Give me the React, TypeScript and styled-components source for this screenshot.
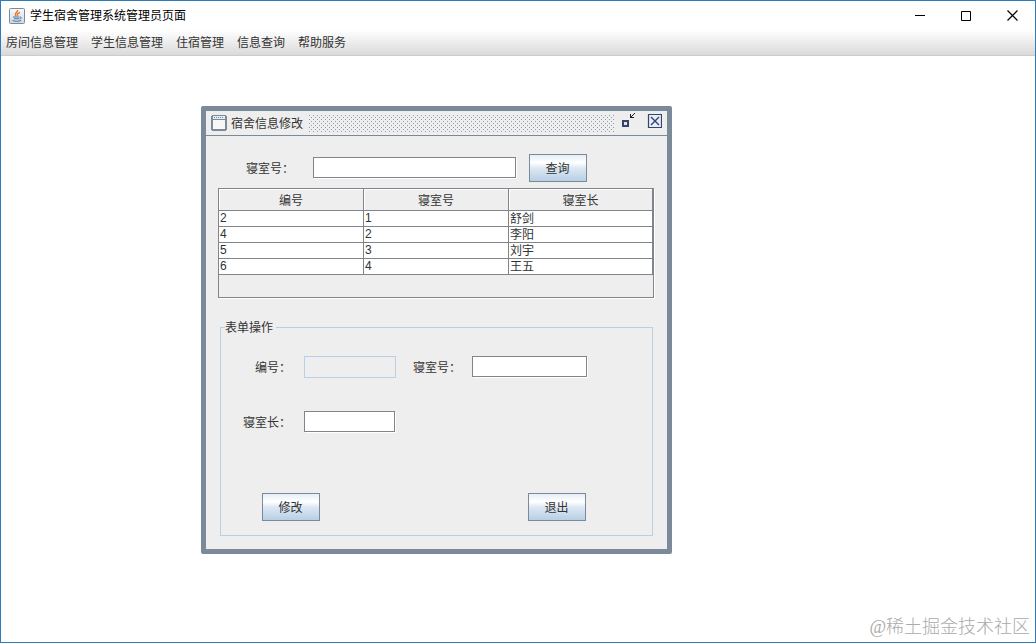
import React from "react";
import styled, { createGlobalStyle } from "styled-components";

const Global = createGlobalStyle`
  * { box-sizing: border-box; }
  body { margin: 0; background: #fff; }
  body, button, input, table {
    font: 12px/16px "Liberation Sans", "Noto Sans CJK SC", sans-serif;
    color: #333;
  }
`;

const AppWindow = styled.div`
  position: relative;
  display: flex;
  flex-direction: column;
  min-height: 100vh;
  border: 1px solid #2f7cba;
  background: #fff;
`;

const WindowBar = styled.header`
  display: flex;
  align-items: center;
  height: 29px;
  padding-left: 8px;
`;

const WindowTitle = styled.h1`
  flex: 1;
  margin: 0 0 0 5px;
  font-size: 12px;
  line-height: 16px;
  font-weight: 400;
  color: #000;
`;

const WindowButton = styled.button`
  display: grid;
  place-items: center;
  width: 46px;
  height: 28px;
  padding: 0;
  border: 0;
  background: none;
`;

const MenuBar = styled.nav`
  display: flex;
  align-items: center;
  gap: 13px;
  height: 26px;
  padding: 0 5px;
  border-bottom: 1px solid #ccc;
  background: linear-gradient(#fff, #dadada);
`;

const MenuItem = styled.button`
  padding: 0;
  border: 0;
  background: none;
`;

const Desktop = styled.main`
  position: relative;
  flex: 1;
`;

const Frame = styled.section`
  position: absolute;
  left: 200px;
  top: 50px;
  width: 471px;
  border: 5px solid #7a8a99;
  border-radius: 2px;
  background: #eee;
`;

const FrameBar = styled.header`
  display: flex;
  align-items: center;
  height: 25px;
  padding: 0 5px;
  border-bottom: 1px solid #7a8a99;
`;

const FrameTitle = styled.h2`
  margin: 0 6px 0 4px;
  padding-top: 2px;
  font-size: 12px;
  line-height: 16px;
  font-weight: 400;
`;

const Grip = styled.div`
  flex: 1;
  height: 17px;
  margin-right: 6px;
  background-image: conic-gradient(at 1px 1px, transparent 75%, #8f9ba7 0),
    conic-gradient(at 1px 1px, transparent 75%, #8f9ba7 0);
  background-size: 4px 4px;
  background-position: 0 0, 2px 2px;
`;

const FrameButton = styled.button`
  display: block;
  height: 20px;
  margin-left: 11px;
  padding: 0;
  border: 0;
  background: none;
  &:first-of-type { margin-left: 0; }
`;

const FrameBody = styled.div`
  padding: 18px 13px 13px 12px;
`;

const SearchRow = styled.form`
  display: flex;
  align-items: center;
  height: 28px;
  padding-left: 28px;
`;

const Label = styled.label<{ $gap: number }>`
  margin-right: ${(p) => p.$gap}px;
  padding-top: 2px;
  white-space: nowrap;
`;

const TextField = styled.input<{ $width: number }>`
  width: ${(p) => p.$width}px;
  height: 21px;
  margin: 0 0 1px;
  padding: 0 3px;
  border: 1px solid #7f858b;
  border-radius: 0;
  background: #fff;
  box-shadow: 1px 1px #fff;
  outline: 0;
  &:disabled {
    height: 22px;
    margin: 0;
    border-color: #b8cfe5;
    background: #eee;
    box-shadow: none;
  }
`;

const PushButton = styled.button`
  width: 58px;
  height: 28px;
  padding: 2px 1px 0 0;
  border: 1px solid #7a8a99;
  background: linear-gradient(#e6eef6, #fff 30%, #dde8f3 50%, #b8cfe5);
`;

const SearchButton = styled(PushButton)`
  margin-left: 13px;
`;

const TablePane = styled.div`
  height: 110px;
  margin-top: 6px;
  border: 1px solid #7f858b;
  box-shadow: 1px 1px #fff;
`;

const Table = styled.table`
  width: 100%;
  table-layout: fixed;
  border-collapse: separate;
  border-spacing: 0;
  th, td {
    border: solid #7f858b;
    border-width: 0 1px 1px 0;
  }
  th {
    width: 145px;
    height: 22px;
    padding: 2px 0 0;
    font-weight: 400;
    box-shadow: inset 1px 1px #fff;
  }
  th:last-child { width: auto; }
  td {
    height: 16px;
    padding: 0 0 0 1px;
    line-height: 15px;
    background: #fff;
  }
  td:last-child {
    padding-top: 1px;
    line-height: 14px;
  }
`;

const FormGroup = styled.fieldset`
  height: 218px;
  min-width: 0;
  margin: 20px 1px 0 2px;
  padding: 20px 22px 0 22px;
  border: 1px solid #b8cfe5;
`;

const Legend = styled.legend`
  margin-left: -18px;
  padding: 2px 3px 0 0;
  line-height: 16px;
`;

const FieldRow = styled.div<{ $indent?: number }>`
  display: flex;
  align-items: center;
  height: 22px;
  margin-bottom: 33px;
  padding-left: ${(p) => p.$indent || 0}px;
`;

const SecondLabel = styled(Label)`
  margin-left: 17px;
`;

const ButtonRow = styled.div`
  display: flex;
  justify-content: space-between;
  margin-top: 60px;
  padding: 0 44px 0 19px;
`;

const Watermark = styled.div`
  position: absolute;
  right: 5px;
  bottom: 2px;
  font: 300 18px/26px "Liberation Serif", "Noto Sans CJK SC", serif;
  color: #aaa;
`;

const menus = ["房间信息管理", "学生信息管理", "住宿管理", "信息查询", "帮助服务"];
const rooms = [
  ["2", "1", "舒剑"],
  ["4", "2", "李阳"],
  ["5", "3", "刘宇"],
  ["6", "4", "王五"],
];

const JavaIcon = () => (
  <svg width="16" height="16" viewBox="0 0 16 16" fill="none">
    <defs>
      <linearGradient id="cupTile" x2="0" y2="1">
        <stop stopColor="#f8fafc" />
        <stop offset="1" stopColor="#ccd8e3" />
      </linearGradient>
    </defs>
    <rect x=".5" y=".5" width="15" height="15" rx="1" fill="url(#cupTile)" stroke="#7b8b9b" />
    <path d="M8.500 2c1 2-4 3-1.500 6M11 4.500C8 5.500 8 6.500 8.800 8" stroke="#e8782c" strokeWidth="1.400" />
    <path d="M4 9h6.500M5 10.800h5M11 9c2 0 1.500 2-.5 2M3.500 12.500c2 1 6.500 1 8.500 0" stroke="#4c7699" />
  </svg>
);

const FrameIcon = () => (
  <svg width="16" height="16" viewBox="0 0 16 16" shapeRendering="crispEdges">
    <path d="M1 0h14v1h1v14h-1v1H1v-1H0V1h1z" fill="#7a8a99" />
    <path d="M2 1h12v3H2z" fill="#e4edf5" />
    <path d="M2 5h12v9H2z" fill="#f7f7f7" />
    <path d="M3 2h1v1H3zM5 2h1v1H5zM7 2h1v1H7zM9 2h1v1H9zM11 2h1v1h-1z" fill="#7a8a99" />
  </svg>
);

export default function App() {
  return (
    <AppWindow>
      <Global />
      <WindowBar>
        <JavaIcon />
        <WindowTitle>学生宿舍管理系统管理员页面</WindowTitle>
        <WindowButton aria-label="最小化">
          <svg width="10" height="11" shapeRendering="crispEdges"><path d="M0 5h10v1H0z" /></svg>
        </WindowButton>
        <WindowButton aria-label="最大化">
          <svg width="10" height="10" fill="none" stroke="#000"><path d="M.5.5h9v9h-9z" /></svg>
        </WindowButton>
        <WindowButton aria-label="关闭">
          <svg width="11" height="11" fill="none" stroke="#000"><path d="M.5.5l10 10M10.500.5l-10 10" strokeWidth="1.200" /></svg>
        </WindowButton>
      </WindowBar>
      <MenuBar>
        {menus.map((m) => <MenuItem key={m}>{m}</MenuItem>)}
      </MenuBar>
      <Desktop>
        <Frame>
          <FrameBar>
            <FrameIcon />
            <FrameTitle>宿舍信息修改</FrameTitle>
            <Grip />
            <FrameButton aria-label="还原">
              <svg width="15" height="20" viewBox="0 0 15 20" shapeRendering="crispEdges">
                <path d="M1 7h7v7H1z" fill="#35436d" />
                <path d="M3 9h3v3H3z" fill="#dfe8f2" />
                <path d="M9 1h1v3h3v1H9zM10 3h1V2h1V1h1V0h1v1h-1v1h-1v1h-1v1h-1z" fill="#222" />
              </svg>
            </FrameButton>
            <FrameButton aria-label="关闭窗口">
              <svg width="15" height="20" viewBox="0 0 15 20" fill="none" stroke="#35436d">
                <path d="M1.500 1.500h13v13h-13z" fill="#e6eef7" strokeWidth="1.200" />
                <path d="M4 4l8 8M12 4l-8 8" strokeWidth="1.400" />
              </svg>
            </FrameButton>
          </FrameBar>
          <FrameBody>
            <SearchRow onSubmit={(e) => e.preventDefault()}>
              <Label $gap={19} htmlFor="search">寝室号：</Label>
              <TextField $width={203} id="search" />
              <SearchButton>查询</SearchButton>
            </SearchRow>
            <TablePane>
              <Table>
                <thead>
                  <tr><th>编号</th><th>寝室号</th><th>寝室长</th></tr>
                </thead>
                <tbody>
                  {rooms.map((r) => (
                    <tr key={r[0]}>{r.map((c, i) => <td key={i}>{c}</td>)}</tr>
                  ))}
                </tbody>
              </Table>
            </TablePane>
            <FormGroup>
              <Legend>表单操作</Legend>
              <FieldRow $indent={12}>
                <Label $gap={13} htmlFor="id">编号：</Label>
                <TextField $width={92} id="id" disabled />
                <SecondLabel $gap={11} htmlFor="room">寝室号：</SecondLabel>
                <TextField $width={115} id="room" />
              </FieldRow>
              <FieldRow>
                <Label $gap={13} htmlFor="leader">寝室长：</Label>
                <TextField $width={91} id="leader" />
              </FieldRow>
              <ButtonRow>
                <PushButton type="button">修改</PushButton>
                <PushButton type="button">退出</PushButton>
              </ButtonRow>
            </FormGroup>
          </FrameBody>
        </Frame>
      </Desktop>
      <Watermark>@稀土掘金技术社区</Watermark>
    </AppWindow>
  );
}
